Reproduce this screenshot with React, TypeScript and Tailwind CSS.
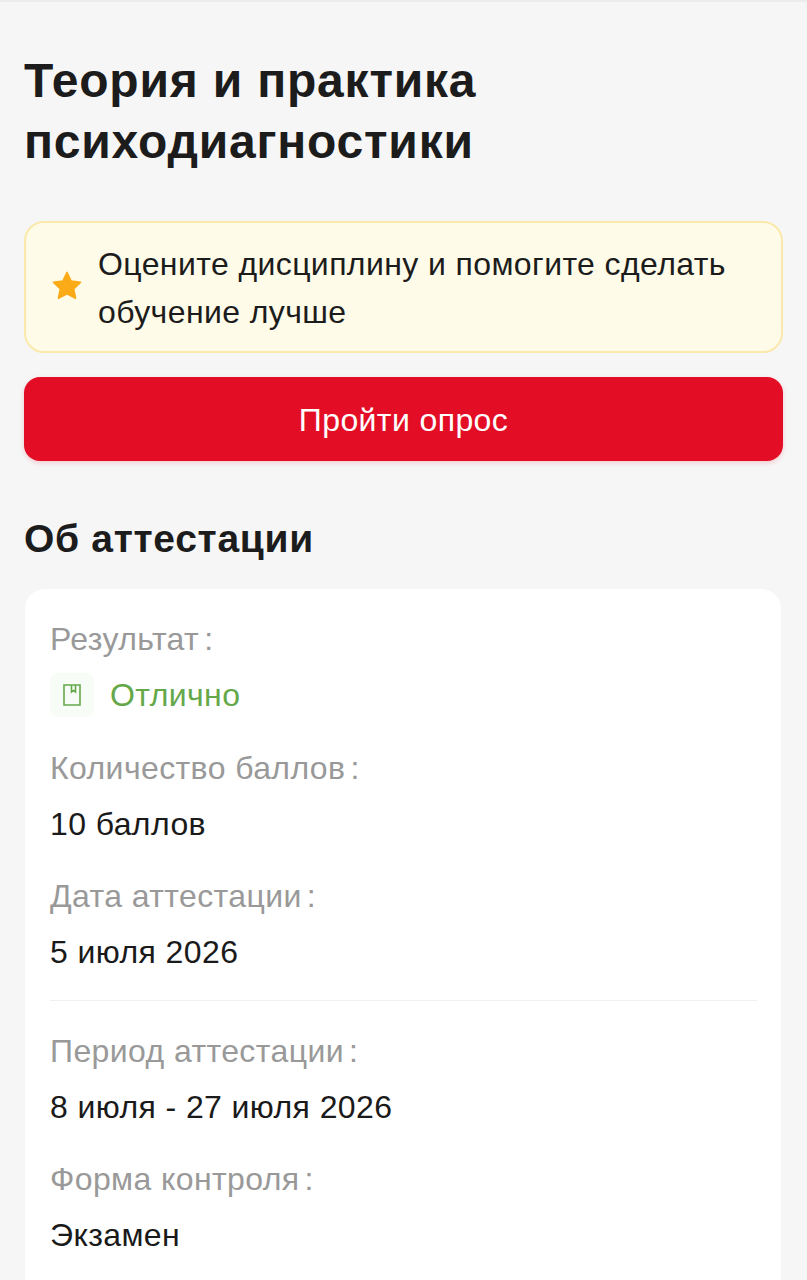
import React from "react";

function Field({ label, value }: { label: string; value: string }) {
  return (
    <div className="flex flex-col">
      <div className="flex h-[56px] items-center text-[#999999]">
        {label}
        <span className="ml-[5px]">:</span>
      </div>
      <div className="flex h-[56px] items-center text-[#1a1a1a]">{value}</div>
    </div>
  );
}

export default function App() {
  return (
    <div className="h-[1280px] overflow-hidden border-t-2 border-[#ececec] bg-[#f6f6f6] px-[24px] font-['Liberation_Sans',sans-serif] text-[32px] tracking-[0.4px]">
      <h1 className="pt-[48px] text-[48px] font-bold leading-[61px] tracking-[0.8px] text-[#1c1c1c]">
        Теория и практика
        <br />
        психодиагностики
      </h1>
      <div className="mt-[49px] flex h-[132px] items-center gap-[15px] rounded-[20px] border-2 border-[#fae9ab] bg-[#fefbe8] pl-[25px] pr-[20px]">
        <svg width="32" height="32" viewBox="0 0 24 24" className="mb-[2px] shrink-0">
          <path
            d="M12 1.8l3.1 6.5 7.1.9-5.2 4.9 1.4 7.1L12 17.8l-6.4 3.4L7 14.1 1.8 9.2l7.1-.9z"
            fill="#fbab18"
            stroke="#fbab18"
            strokeWidth="1.2"
            strokeLinejoin="round"
          />
        </svg>
        <div className="pt-[2px] leading-[48px] text-[#1c1c1c]">
          Оцените дисциплину и помогите сделать обучение лучше
        </div>
      </div>
      <button className="mt-[24px] flex h-[84px] w-full items-center justify-center rounded-[16px] bg-[#e30d26] pt-[2px] text-white shadow-[0_2px_5px_rgba(227,13,38,0.18)]">
        Пройти опрос
      </button>
      <h2 className="mt-[54px] text-[39px] font-bold leading-[48px] tracking-[0.7px] text-[#1c1c1c]">Об аттестации</h2>
      <div className="mt-[26px] ml-[1px] mr-[2px] h-[800px] rounded-t-[20px] bg-white pl-[25px] pr-[24px] pt-[22px]">
        <div className="flex h-[56px] items-center text-[#999999]">
          Результат<span className="ml-[5px]">:</span>
        </div>
        <div className="flex h-[56px] items-center gap-[16px] text-[#64a84a]">
          <div className="flex h-[44px] w-[44px] items-center justify-center rounded-[8px] bg-[#f8fcf6]">
            <svg width="18" height="22" viewBox="0 0 18 22" fill="none" stroke="#64a84a" strokeWidth="1.6">
              <path d="M1 1h16v20H1z" />
              <path d="M8.5 1v7l2-1.4 2 1.4V1" />
            </svg>
          </div>
          Отлично
        </div>
        <div className="mt-[17px]">
          <Field label="Количество баллов" value="10 баллов" />
        </div>
        <div className="mt-[16px]">
          <Field label="Дата аттестации" value="5 июля 2026" />
        </div>
        <div className="mt-[20px] h-[1px] bg-[#efefef]" />
        <div className="mt-[22px]">
          <Field label="Период аттестации" value="8 июля - 27 июля 2026" />
        </div>
        <div className="mt-[16px]">
          <Field label="Форма контроля" value="Экзамен" />
        </div>
      </div>
    </div>
  );
}
